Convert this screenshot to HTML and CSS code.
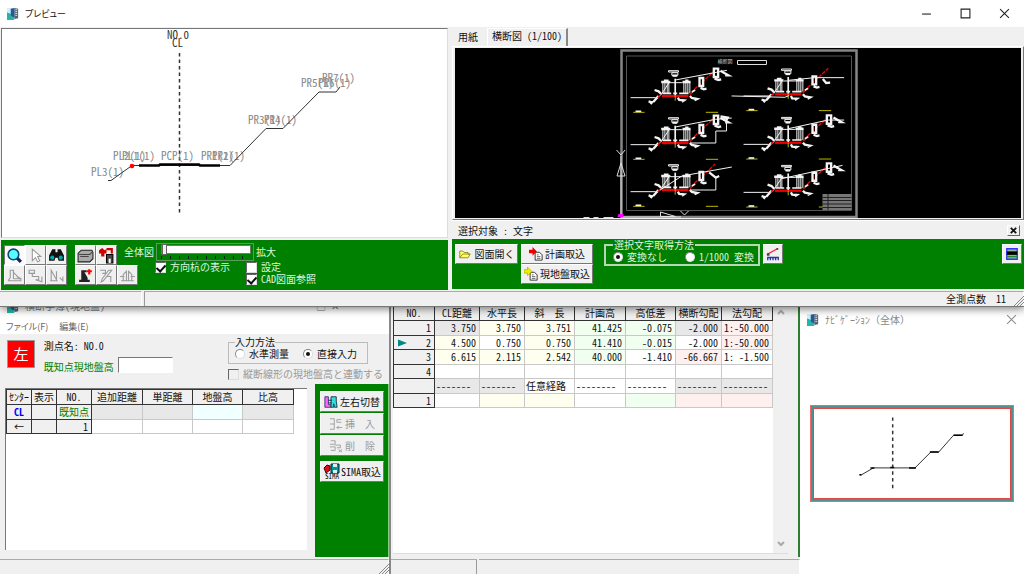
FILE: index.html
```html
<!DOCTYPE html>
<html lang="ja">
<head>
<meta charset="utf-8">
<title>プレビュー</title>
<link rel="stylesheet" href="styles.css">
</head>
<body>
<svg class="defs" aria-hidden="true">
  <defs>
    <symbol id="app" viewBox="0 0 14 14"><path d="M0 1h9v12H0z" fill="#cfeef5"/><path d="M0 6q6 1 8 8H0z" fill="#22b7a4"/><path d="M4 2l4-1v11l-4-3z" fill="#245a9c"/><path d="M8 1l4 1v10l-4 1z" fill="#56636e"/><path d="M9 3h2M9 5h2M9 7h2M9 9h2" stroke="#dfe8ee"/></symbol>
    <g id="section">
      <path d="M-134 5h75l14-5 30-45" class="w"/>
      <path d="M-40 0H40" class="r base"/><path d="M-38-8h26m6 0h12m6 0h28" class="w mark"/>
      <path d="M-37-42v34m6-34v34m7-34v34m5-34v34M26-42v34m6-34v34m6-34v34m6-34v34" class="w"/>
      <path d="M-42-42h26M22-42h24M-34-46h14m50 0h10" class="w bold"/><path d="M-16-40H22" class="w"/>
      <path d="M0-52V-2" class="w mark"/><path d="M0 0v14" class="y"/>
      <path d="M-20-76h30v4h-30zM-10-70H8v8h-18z" class="w"/><path d="M-8-61H6" class="w bold"/>
      <path d="M-62-18l12 4 8 8M-80 16l10 3-4 5m8-6 16-18M8 5l4 7 14 1-6 4M44 0l6 6 16 3-8 4" class="w bold"/>
      <path d="M-52 6l8-10M44-4l16-16" class="r"/><path d="M50-12l10-6" class="w mark"/>
      <path d="M58-20l62-58" class="r" stroke-dasharray="12 3"/>
      <path d="M73-54h11v24H73zM76-24l10 4 8-2" class="w bold"/>
      <path d="M-126 49h34M92 49h37" class="y"/><path d="M-119 46h17" class="w mark"/>
    </g>
    <g id="upper">
      <path d="M116-82h13v25h-13zM118-52l12 4 8-2M136-76l10 6 14 8h-10" class="w bold"/>
    </g>
  </defs>
</svg>

<main class="desktop">
<section class="preview" aria-label="プレビュー">
  <header class="titlebar">
    <svg class="app-icon"><use href="#app"/></svg><h1 class="title">プレビュー</h1>
    <div class="caption">
      <button aria-label="最小化"><svg viewBox="0 0 10 10"><path d="M1 5.500h8"/></svg></button>
      <button aria-label="最大化"><svg viewBox="0 0 10 10"><path d="M1 1h8v8H1z"/></svg></button>
      <button aria-label="閉じる"><svg viewBox="0 0 10 10"><path d="M1 1l8 8M9 1L1 9"/></svg></button>
    </div>
  </header>
  <div class="workspace">
    <div class="profile">
      <svg class="profile-view" viewBox="2 29 445 208">
        <g class="strong"><text x="167" y="39">NO.0</text><text x="172" y="47">CL</text></g>
        <path d="M179.500 53V213" stroke="#333" stroke-width="1.500" stroke-dasharray="3.500 3" fill="none"/>
        <g class="soft">
          <text x="91" y="176">PL3(1)</text><text x="113" y="160">PL2(1)</text><text x="122" y="160">PL1(1)</text><text x="161" y="160">PCP(1)</text><text x="201" y="160">PR1(1)</text><text x="212" y="160">PR2(1)</text><text x="248" y="124">PR3(1)</text><text x="264" y="124">PR4(1)</text><text x="301" y="87">PR5(1)</text><text x="318" y="87">PR6(1)</text><text x="322" y="82">PR7(1)</text>
        </g>
        <path d="M108 180.500h3l21-15h98l36-37h17l36-36.500h17l4-5" fill="none" stroke="#333"/>
        <path d="M139 165.500h20l1-1h39l1 1h20" fill="none" stroke="#000" stroke-width="2.500"/>
        <circle cx="132" cy="166" r="2.300" fill="red"/>
      </svg>
      <div class="tools">
        <div class="tool-grid">
          <button class="pressed" aria-label="拡大鏡"><svg viewBox="0 0 16 16"><path d="M10 10l4 4" stroke="#126" stroke-width="3"/><circle cx="7" cy="7" r="5" fill="#5ff" stroke="#147" stroke-width="1.500"/></svg></button>
          <button disabled aria-label="選択"><svg viewBox="0 0 16 16"><path d="M5 2v11l3-3 2 4 2-1-2-4h3z" fill="#fff" stroke="#999"/></svg></button>
          <button aria-label="検索"><svg viewBox="0 0 16 16"><path d="M4 2h3v3h2V2h3l3 6v5h-5l-1-3H7l-1 3H1V8z" fill="#111"/><circle cx="4" cy="10" r="2" fill="#0aa"/><circle cx="12" cy="10" r="2" fill="#0aa"/></svg></button>
          <button disabled aria-label="測点"><svg viewBox="0 0 16 16"><path d="M2 13h12v-2l-4-2M2 13l2-3V3h3v8m0-6l6 6H7" fill="none" stroke="#999"/></svg></button>
          <button disabled aria-label="移動"><svg viewBox="0 0 16 16"><path d="M2 3h5v3H2zM5 6v3h6v3H8l6 2V9" fill="none" stroke="#999"/></svg></button>
          <button disabled aria-label="折線"><svg viewBox="0 0 16 16"><path d="M3 13V3l5 9V4m-6 9h7m2-3l3 3V9" fill="none" stroke="#999"/></svg></button>
        </div>
        <div class="tool-grid">
          <button aria-label="印刷"><svg viewBox="0 0 16 16"><path d="M1 6l3-3h10l1 2v6l-3 3H1z" fill="#aaa" stroke="#222"/><path d="M2 7h10l2-2M3 9h8" fill="none" stroke="#444"/></svg></button>
          <button aria-label="保存"><svg viewBox="0 0 16 16"><path d="M8 7h6v8H8z" fill="#444" stroke="#000"/><path d="M10 11h2v4h-2z" fill="#fff"/><path d="M1 3l3-2 2 2 2-1v4H6v3H3V6H1z" fill="#c00"/><path d="M8 2h5v4" fill="none" stroke="#c00" stroke-width="2"/></svg></button>
          <span></span>
          <button aria-label="追加"><svg viewBox="0 0 16 16"><path d="M4 3h5v2H7l3 5v2h2v2H2v-2h2z" fill="#222"/><path d="M9 4h5M11.500 2v5" stroke="red" stroke-width="2"/></svg></button>
          <button disabled aria-label="編集"><svg viewBox="0 0 16 16"><path d="M2 3h5v3H4m9-3L5 13l-2 1 1-3 6-8zM8 9h4v5" fill="none" stroke="#999"/></svg></button>
          <button disabled aria-label="削除"><svg viewBox="0 0 16 16"><path d="M2 13h12M4 13V7l3-3v9m2 0V4l3 3v6M1 9h4m6 0h4" fill="none" stroke="#999"/></svg></button>
        </div>
        <div class="view-options">
          <div class="zoom"><label for="zoom">全体図</label><span class="track"><input id="zoom" type="range" min="0" max="10" value="0"><span class="ticks"></span></span><span>拡大</span></div>
          <div class="checks">
            <label><input type="checkbox" checked>方向杭の表示</label>
            <label><input type="checkbox">設定</label>
            <label class="second"><input type="checkbox" checked>CAD図面参照</label>
          </div>
        </div>
      </div>
    </div>
    <div class="cad">
      <div class="tabs" role="tablist"><button role="tab">用紙</button><button role="tab" class="active" aria-selected="true">横断図 (1/100)</button></div>
      <div class="cad-frame">
      <svg class="cad-view" viewBox="455 48 565 170">
        <path d="M621 50.500h235V217H621z" fill="none" stroke="#858585" stroke-width="2.500"/>
        <path d="M626 56h225v154.500H626z" fill="none" stroke="#555"/>
        <text x="717" y="62.500" class="sheet-title">横断図</text>
        <path d="M737 60.500h29v4h-29z" fill="none" stroke="#ddd"/>
        <g transform="translate(674.700 96) scale(.333)"><use href="#section"/><use href="#upper"/><path d="M0-48l155-29" class="w"/></g>
        <g transform="translate(674.700 143) scale(.333)"><use href="#section"/><use href="#upper"/><path d="M0-48l120-23 50-4M44 0h78v-36h32v-38" class="w"/><path d="M136-80l22 4-6 10" class="w bold"/></g>
        <g transform="translate(674.700 190) scale(.333)"><use href="#section"/><path d="M-45 0L20-42l150-27M44 0h78v-35" class="w"/><path d="M102-53l20 16 10-5" class="w bold"/></g>
        <g transform="translate(787.700 94.300) scale(.333)"><use href="#section"/><path d="M-170 5l160 4 12-5M0-42l80-8h88" class="w"/><path d="M104-46l10 12 12-1" class="w bold"/></g>
        <g transform="translate(787.700 142.700) scale(.333)"><use href="#section"/><use href="#upper"/><path d="M0-42l120-26h48" class="w"/></g>
        <g transform="translate(787.700 190.700) scale(.333)"><use href="#section"/><use href="#upper"/><path d="M-20-36L163-76" class="w"/></g>
        <path d="M822 194h29v16h-29z" fill="#777"/><path d="M822 197.500h29M822 200.500h29M822 204h29M822 207.500h29M827.500 194v16" stroke="#222"/>
        <path d="M620.500 156v61h60M616 150l4.500 5 4-5M620.500 163l4 13h-8zM660 212l15 4.500h-15zM680 211l4 4 4-4M583 217.500h6m4 0h5m5 0h10" fill="none" stroke="#ddd"/>
        <path d="M617 217l1-3h5v3z" fill="#f0f"/>
      </svg>
      </div>
      <div class="target"><span>選択対象 : 文字</span><button aria-label="閉じる"><svg viewBox="0 0 10 10"><path d="M2 2l6 6M8 2L2 8"/></svg></button></div>
      <div class="cad-tools">
        <button class="btn open"><svg viewBox="0 0 16 16"><path d="M1 13V4h4l2 2h5v2h3l-3 5z" fill="#ff6" stroke="#770"/><path d="M1 13l4-5h9" fill="none" stroke="#770"/></svg>図面開く</button>
        <div class="imports">
          <button class="btn"><svg viewBox="0 0 16 16"><path d="M7 6h5l3 3v6H7z" fill="#fff" stroke="#222"/><path d="M9 9h2m-2 2h4m-4 2h4" stroke="#555"/><path d="M0 3h4V0l5 5-5 5V7H0z" fill="#e00"/></svg>計画取込</button>
          <button class="btn"><svg viewBox="0 0 16 16"><path d="M7 6h5l3 3v6H7z" fill="#fff" stroke="#222"/><path d="M9 9h2m-2 2h4m-4 2h4" stroke="#555"/><path d="M0 3h4V0l5 5-5 5V7H0z" fill="#ee0" stroke="#880" stroke-width=".5"/></svg>現地盤取込</button>
        </div>
        <fieldset class="method"><legend>選択文字取得方法</legend><label><input type="radio" name="scale" checked>変換なし</label><label><input type="radio" name="scale">1/1000 変換</label></fieldset>
        <button class="btn square" aria-label="計測"><svg viewBox="0 0 16 16"><path d="M2 8l11-6" stroke="#e22" stroke-width="1.500"/><path d="M1 7h3v3H1zM12 1h2v2h-2z" fill="#444"/><path d="M2 15v-3h12v3M5 12v3m3-3v3m3-3v3" fill="none" stroke="#23a" stroke-width="1.500"/></svg></button>
        <button class="btn square last" aria-label="表示"><svg viewBox="0 0 16 16"><path d="M2 2h12v12H2z" fill="#8b8" stroke="#33f" stroke-width="1.500"/><path d="M2 5h12v4H2z"/><path d="M2 11h12" stroke="#283" stroke-width="1.500"/></svg></button>
      </div>
    </div>
  </div>
  <footer class="status"><span class="pane first"></span><span class="pane">全測点数<b>11</b></span><svg class="grip" viewBox="0 0 10 10"><path d="M0 10L10 0M3 10l7-7M6 10l4-4"/></svg></footer>
</section>

<div class="lower">
  <section class="win ground" aria-label="横断入力">
    <header class="hidden-title"><svg class="app-icon"><use href="#app"/></svg>横断手簿(現地盤)<span class="hidden-caption">□ ✕</span></header>
    <nav class="menu"><button>ファイル(F)</button><button>編集(E)</button></nav>
    <div class="info">
      <button class="side">左</button>
      <div class="names"><p>測点名: NO.0</p><label>既知点現地盤高<input type="text"></label></div>
      <div class="modes">
        <fieldset class="entry"><legend>入力方法</legend><label><input type="radio" name="entry">水準測量</label><label><input type="radio" name="entry" checked>直接入力</label></fieldset>
        <label class="link"><input type="checkbox" disabled>縦断線形の現地盤高と連動する</label>
      </div>
    </div>
    <div class="ground-body">
      <div class="sheet">
        <table class="grid ground-table">
          <colgroup><col class="c25"><col class="c25"><col class="c35"><col class="c51"><col class="c50"><col class="c50"><col class="c51"></colgroup>
          <thead><tr><th>ｾﾝﾀｰ</th><th>表示</th><th>NO.</th><th>追加距離</th><th>単距離</th><th>地盤高</th><th>比高</th></tr></thead>
          <tbody>
            <tr><td class="fix cl">CL</td><td class="fix"></td><td class="fix known">既知点</td><td class="gray"></td><td class="gray"></td><td class="aqua"></td><td class="gray"></td></tr>
            <tr><td class="fix mid">←</td><td class="fix"></td><td class="fix">1</td><td></td><td></td><td></td><td></td></tr>
          </tbody>
        </table>
      </div>
      <div class="actions">
        <button class="btn"><svg viewBox="0 0 16 16"><path d="M1 2h4v9h3v3H1z" fill="#f6f" stroke="#336"/><path d="M8 2h6v5l1 7h-3l-1-4v4H8z" fill="#3dd" stroke="#134"/><path d="M5 6h4M5 9h4" stroke="#114"/></svg>左右切替</button>
        <button class="btn" disabled><svg viewBox="0 0 16 16"><path d="M1 2h5v12H1m0-6h5m8-5h-5v3h5m1 6H9m2-2l-2 2 2 2" fill="none" stroke="#999"/></svg>挿　入</button>
        <button class="btn" disabled><svg viewBox="0 0 16 16"><path d="M2 2h5v4H1m0 3h6v4H2m5-6h6v3H9m2 2l4 3m0-3l-4 3" fill="none" stroke="#999"/></svg>削　除</button>
        <button class="btn sima"><svg viewBox="0 0 16 18"><path d="M7 1h8v9H7z" fill="#099" stroke="#023"/><path d="M9 1h4v3H9zM9 7h4v3H9z" fill="#dee"/><path d="M0 5l3-3 3 1v4l-4 3z" fill="#d11" stroke="#400"/><text x="1" y="16" font-size="7">SIMA</text></svg>SIMA取込</button>
      </div>
    </div>
    <footer class="status"><span class="pane"></span><svg class="grip" viewBox="0 0 10 10"><path d="M0 10L10 0M3 10l7-7M6 10l4-4"/></svg></footer>
  </section>

  <section class="win plan" aria-label="計画">
    <div class="plan-body">
      <div class="plan-sheet">
        <table class="grid plan-table">
          <colgroup><col class="c41"><col class="c45"><col class="c45"><col class="c50"><col class="c51"><col class="c50"><col class="c46"><col class="c51"></colgroup>
          <thead><tr><th>NO.</th><th>CL距離</th><th>水平長</th><th>斜　長</th><th>計画高</th><th>高低差</th><th>横断勾配</th><th>法勾配</th></tr></thead>
          <tbody>
            <tr><td class="fix">1</td><td class="gray">3.750</td><td class="yel">3.750</td><td class="yel">3.751</td><td class="grn">41.425</td><td class="grn">-0.075</td><td class="gray">-2.000</td><td class="pink">1:-50.000</td></tr>
            <tr><td class="fix"><span class="current"><svg viewBox="0 0 10 8"><path d="M0 0l10 4-10 4z" fill="#088"/></svg>2</span></td><td class="yel">4.500</td><td>0.750</td><td class="yel">0.750</td><td class="grn">41.410</td><td class="grn">-0.015</td><td>-2.000</td><td class="pink">1:-50.000</td></tr>
            <tr><td class="fix">3</td><td class="yel">6.615</td><td class="yel">2.115</td><td class="yel">2.542</td><td class="grn">40.000</td><td>-1.410</td><td class="pink">-66.667</td><td>1: -1.500</td></tr>
            <tr><td class="fix">4</td><td></td><td></td><td></td><td></td><td></td><td></td><td></td></tr>
            <tr class="dash"><td class="fix"></td><td class="gray">-------</td><td class="gray">-------</td><td>任意経路</td><td>--------</td><td>--------</td><td class="gray">--------</td><td class="gray">---------</td></tr>
            <tr><td class="fix">1</td><td></td><td class="yel"></td><td class="yel"></td><td></td><td class="grn"></td><td class="pink"></td><td class="pink"></td></tr>
          </tbody>
        </table>
        <div class="scroll"><button aria-label="上へ"><svg viewBox="0 0 8 8"><path d="M1 6l3-3 3 3"/></svg></button><button aria-label="下へ"><svg viewBox="0 0 8 8"><path d="M1 2l3 3 3-3"/></svg></button></div>
      </div>
    </div>
    <footer class="status"><span class="pane first"></span><span class="pane"></span></footer>
  </section>

  <section class="win navi" aria-label="ナビゲーション">
    <header class="titlebar"><svg class="app-icon"><use href="#app"/></svg><h2>ﾅﾋﾞｹﾞｰｼｮﾝ（全体）</h2><button class="close" aria-label="閉じる"><svg viewBox="0 0 10 10"><path d="M1 1l8 8M9 1L1 9"/></svg></button></header>
    <div class="map">
      <svg viewBox="812 408 200 92"><path d="M892.500 417.500v72" stroke="#333" stroke-width="1.500" stroke-dasharray="3.500 3.300"/><path d="M859 475.500h2l12-7h42l16-16h8l15-17h9l1-2" fill="none" stroke="#333"/><path d="M859 475.500h2M870 468.500h4M890 468h4M909 468.500h7M930 452.500h9M954 435.500h9" fill="none" stroke="#000" stroke-width="1.500"/></svg>
    </div>
  </section>
</div>
</main>
</body>
</html>
```

FILE: styles.css
```css
* { box-sizing: border-box; }
body { margin: 0; background: #fff; color: #111; font: 10px/12px "Noto Sans Mono CJK JP", "Noto Sans CJK JP", sans-serif; }
button, input { font: inherit; color: inherit; margin: 0; padding: 0; }
button { border: 0; background: none; white-space: nowrap; }
h1, h2, p { margin: 0; font: inherit; }
svg { display: block; }
.defs { position: absolute; width: 0; height: 0; }
.desktop { min-height: 100vh; display: flex; flex-direction: column; padding-bottom: 2px; overflow: hidden; }

.preview { position: relative; z-index: 2; background: #f0f0f0; border-bottom: 1px solid #777; box-shadow: 0 2px 8px rgba(0, 0, 0, .5); }
.titlebar { display: flex; align-items: center; height: 27px; background: #fff; padding-left: 7px; }
.app-icon { width: 13px; height: 13px; margin-right: 5px; flex: none; }
.title { font-family: "Noto Sans CJK JP", sans-serif; font-size: 9px; font-feature-settings: "palt"; }
.caption { margin-left: auto; display: flex; }
.caption button { width: 39px; height: 27px; display: grid; place-items: center; }
.caption svg, .close svg { width: 11px; height: 11px; fill: none; stroke: #222; }

.workspace { display: grid; grid-template-columns: 448fr 572fr; gap: 4px; padding-top: 1px; }
.profile { display: flex; flex-direction: column; gap: 2px; padding-left: 1px; min-width: 0; }
.profile-view { width: 100%; height: 210px; background: #fff; border: 1px solid #777; border-right-color: #ddd; border-bottom-color: #ddd; }
.profile-view text { font-size: 11px; }
.strong { fill: #333; }
.soft { fill: #888; }
.tools { display: flex; height: 50px; background: #008000; padding: 5px 3px; gap: 8px; }
.tool-grid { display: grid; grid-template-columns: repeat(3, 21px); grid-template-rows: 20px 20px; flex: none; }
.tool-grid button, .btn { background: #f0f0f0; border: 1px solid #fff; border-right-color: #777; border-bottom-color: #777; display: flex; align-items: center; justify-content: center; }
.tool-grid button svg { width: 17px; height: 17px; }
.tool-grid .pressed { background: #fafafa; border-color: #777 #fff #fff #777; }
.view-options { color: #dff5df; min-width: 0; margin-top: -2px; margin-left: -22px; z-index: 1; }
.zoom { display: flex; height: 18px; line-height: 14px; gap: 2px; align-items: center; }
.track { width: 98px; height: 18px; border: 1px solid #5a9c5a; padding: 1px 4px 0; }
.track input { appearance: none; display: block; width: 90px; height: 9px; background: #fff; border: 1px solid #777; }
.track input::-webkit-slider-thumb { appearance: none; width: 5px; height: 11px; background: #f0f0f0; border: 1px solid #666; }
.ticks { display: block; height: 3px; margin-top: 2px; background: repeating-linear-gradient(90deg, #021 0 1px, transparent 1px 9px); }
.checks { display: grid; grid-template-columns: 91px auto; margin-left: 31px; }
.checks label, .link { display: flex; align-items: center; gap: 4px; height: 12px; white-space: nowrap; }
.checks .second { grid-column: 2; }
input[type=checkbox] { appearance: none; width: 11px; height: 11px; background: #fff; border: 1px solid #666; border-right-color: #ddd; border-bottom-color: #ddd; display: grid; place-items: center; flex: none; }
input[type=checkbox]:checked::before { content: ""; width: 4px; height: 7px; border: solid #111; border-width: 0 2px 2px 0; transform: rotate(42deg); }
input[type=checkbox]:disabled { background: #f0f0f0; }
input[type=radio] { appearance: none; width: 10px; height: 10px; border-radius: 50%; background: #fff; border: 1px solid #888; border-right-color: #ddd; border-bottom-color: #ddd; display: grid; place-items: center; flex: none; }
input[type=radio]:checked::before { content: ""; width: 4px; height: 4px; border-radius: 50%; background: #111; }

.cad { display: flex; flex-direction: column; min-width: 0; }
.tabs { display: flex; height: 18px; align-items: flex-end; padding-left: 3px; }
.tabs button { height: 18px; padding: 0 6px 0 3px; }
.tabs .active { border: 1px solid #fff; border-right: 2px solid #888; border-bottom: 0; padding: 0 4px 4px; margin-left: 3px; }
.cad-frame { padding: 1px 2px; border: 1px solid #fff; border-right-color: #777; border-bottom-color: #777; }
.cad-view { width: 100%; height: 170px; background: #000; }
.w { fill: none; stroke: #f4f4f4; stroke-width: 3px; }
.mark { stroke-width: 5px; }
.bold { stroke-width: 7px; }
.r { fill: none; stroke: #f00000; stroke-width: 4px; }
.base { stroke-width: 7px; }
.y { fill: none; stroke: #b8b800; stroke-width: 3px; }
.sheet-title { font-size: 5px; fill: #ccc; }
.target { display: flex; align-items: center; justify-content: space-between; height: 18px; padding: 2px 4px 0 6px; border-top: 1px solid #fff; }
.target button { width: 13px; height: 11px; border: 1px solid #fff; border-right-color: #666; border-bottom-color: #666; display: grid; place-items: center; }
.target svg { width: 9px; height: 9px; stroke: #111; stroke-width: 2px; }
.cad-tools { display: flex; align-items: flex-start; height: 50px; margin-top: 1px; background: #008000; padding: 5px 2px 0 3px; }
.btn { height: 20px; gap: 3px; }
.btn svg { width: 14px; height: 14px; flex: none; }
.open { width: 63px; margin-right: 3px; gap: 4px; }
.open svg { width: 12px; }
.imports { display: grid; width: 72px; margin-right: 11px; }
.imports .btn { gap: 2px; }
fieldset { margin: 0; border: 1px solid #ccc; padding: 0; min-width: 0; display: flex; align-items: center; white-space: nowrap; }
fieldset legend { line-height: 10px; padding: 0 1px; }
fieldset label { display: flex; align-items: center; gap: 4px; }
.method { width: 156px; height: 26px; margin-top: -4px; margin-right: 3px; padding: 0 4px 1px 7px; justify-content: space-between; color: #dff5df; border: 2px solid #b6d8b6; }
.square { width: 20px; }
.last { margin-left: auto; }

.status { display: flex; align-items: stretch; height: 15px; background: #f0f0f0; position: relative; }
.status .pane { flex: 1; border-top: 1px solid #aaa; border-right: 1px solid #fff; text-align: right; padding-right: 17px; line-height: 14px; }
.status .first { flex: none; width: 142px; margin-right: 2px; }
.status b { font-weight: normal; margin-left: 10px; }
.preview .status { margin-top: 1px; }
.preview .pane + .pane { border-left: 1px solid #999; }
.grip { position: absolute; right: 0; bottom: 0; width: 10px; height: 10px; stroke: #888; }

.lower { flex: 1; display: grid; grid-template-columns: 391fr 409fr 224fr; margin-top: -8px; }
.win { min-width: 0; display: flex; flex-direction: column; background: #f0f0f0; }
.ground { border-right: 2px solid #888; }
.hidden-title { display: flex; align-items: center; height: 20px; background: #fff; color: #777; padding: 0 50px 6px 7px; }
.hidden-caption { margin-left: auto; }
.menu { display: flex; gap: 11px; height: 15px; padding-left: 6px; background: #fff; font-family: "Noto Sans CJK JP", sans-serif; font-size: 9px; font-feature-settings: "palt"; color: #666; }
.info { display: flex; height: 50px; padding: 6px 6px 0 7px; }
.side { width: 28px; height: 28px; background: #f00; color: #fff; border: 1px solid #999; font-size: 15px; line-height: 20px; }
.names { margin-left: 9px; width: 131px; line-height: 12px; }
.names label { display: flex; align-items: flex-end; gap: 4px; color: #008000; margin-top: 4px; height: 17px; white-space: nowrap; }
.names input { width: 55px; height: 16px; border: 1px solid #777; border-right-color: #fff; border-bottom-color: #fff; background: #fff; }
.modes { margin-left: 54px; width: 155px; flex: none; }
.entry { width: 140px; height: 27px; margin-top: -3px; padding: 0 10px 2px 6px; justify-content: space-between; border-color: #bbb; }
.entry legend { padding: 0; }
.link { margin-top: 4px; color: #999; }
.ground-body { flex: 1; display: flex; gap: 8px; padding: 0 0 2px 5px; }
.sheet { flex: 1; background: #fff; margin: 4px 0 7px; border-top: 1px solid #777; border-left: 1px solid #777; min-width: 0; }
.actions { width: 74px; background: #008000; padding: 7px 5px; display: flex; flex-direction: column; gap: 1px; border-right: 1px solid #8c8; }
.actions .btn { height: 21px; gap: 1px; width: 64px; }
.actions .btn:disabled { color: #999; }
.actions .btn:not(.sima) svg { margin-right: 1px; }
.actions .sima { margin-top: 4px; gap: 0; }
.sima svg { width: 18px; height: 18px; }

.grid { border-collapse: collapse; table-layout: fixed; line-height: 12px; }
.grid th { font-weight: normal; background: #f0f0f0; border: 1px solid #333; padding: 0; white-space: nowrap; height: 15px; }
.grid td { border: 1px solid #c8c8c8; padding: 0 3px 0 0; text-align: right; white-space: nowrap; }
.grid tbody tr { height: 15px; }
.grid tbody tr:nth-child(even) { height: 14px; }
.grid td.fix { background: #f0f0f0; border-color: #333; }
.ground-table { width: 287px; }
.plan-table { width: 379px; }
.grid td.cl { color: #00f; font-weight: bold; text-align: center; padding: 0; }
.grid td.mid { text-align: center; padding: 0; }
.grid td.known { color: #008000; padding: 0 2px 0 0; }
.gray { background: #e8e8e8; }
.aqua { background: #f0ffff; }
.yel { background: #fffff0; }
.grn { background: #f0fff0; }
.pink { background: #fff0f0; }
.grid .dash td { text-align: left; padding: 0 0 0 1px; }
.c25 { width: 25px; } .c35 { width: 35px; } .c41 { width: 41px; } .c45 { width: 45px; } .c46 { width: 46px; } .c50 { width: 50px; } .c51 { width: 51px; }
.current { display: flex; align-items: center; justify-content: space-between; padding-left: 4px; }
.current svg { width: 9px; height: 8px; }
.plan-body { flex: 1; display: flex; padding: 0 10px 3px 2px; border-right: 2px solid #2e7d32; margin-bottom: 2px; }
.plan-sheet { flex: 1; display: flex; background: #fff; align-items: flex-start; padding-top: 6px; min-width: 0; border-bottom: 1px solid #ddd; }
.scroll { align-self: stretch; width: 15px; margin-left: auto; background: #f0f0f0; display: flex; flex-direction: column; justify-content: space-between; padding-bottom: 2px; }
.scroll button { height: 14px; display: grid; place-items: center; }
.scroll svg { width: 8px; height: 8px; fill: none; stroke: #aaa; stroke-width: 2px; }
.plan .status .first { width: 86px; border-right: 1px solid #999; }
.navi { background: #fff; }
.navi .titlebar { margin-top: 7px; color: #888; }
.close { margin-left: auto; margin-right: 7px; opacity: .5; }
.map { margin: 72px 10px 0; border: 1px solid #f06868; }
.map svg { width: 100%; border: 2px solid #4f9090; outline: 1px solid #e04848; outline-offset: -3px; }
```
